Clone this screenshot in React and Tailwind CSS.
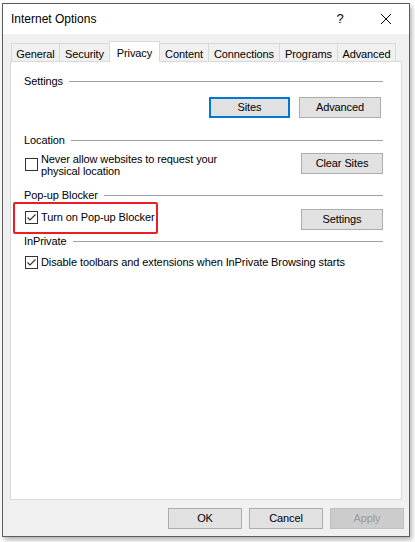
import React from "react";

const tabs = [
  { label: "General", w: "w-[49px]" },
  { label: "Security", w: "w-[51px]" },
  { label: "Privacy", w: "w-[51px]", active: true },
  { label: "Content", w: "w-[50px]" },
  { label: "Connections", w: "w-[72px]" },
  { label: "Programs", w: "w-[59px]" },
  { label: "Advanced", w: "w-[59px]" },
];

// Encabezado de grupo con línea
const GroupHeader = ({ label, className = "" }) => (
  <div className={`flex items-center h-[14px] ${className}`}>
    <span className="leading-[14px]">{label}</span>
    <div className="flex-1 h-px bg-[#a0a0a0] ml-[6px]" />
  </div>
);

const CheckBox = ({ checked }) => (
  <div className="w-[13px] h-[13px] border border-[#333333] bg-white shrink-0 flex items-center justify-center">
    {checked && (
      <svg width="11" height="11" viewBox="0 0 11 11">
        <polyline
          points="1.5,5.5 4,8 9.5,2.5"
          fill="none"
          stroke="#333333"
          strokeWidth="1.2"
        />
      </svg>
    )}
  </div>
);

const WinButton = ({ children, className = "" }) => (
  <div
    className={`h-[21px] flex items-center justify-center bg-[#e1e1e1] border border-[#adadad] ${className}`}
  >
    {children}
  </div>
);

export default function App() {
  return (
    <div
      className="w-[415px] h-[542px] bg-white pl-[2px] pt-[3px] text-[11px] tracking-[-0.1px] text-black"
      style={{ fontFamily: '"Liberation Sans", Arial, sans-serif' }}
    >
      <div className="w-[408px] h-[534px] border border-[#5c5c5c] flex flex-col shadow-[2px_3px_5px_rgba(0,0,0,0.3)]">
        {/* Barra de título */}
        <div className="h-[30px] bg-white flex items-center shrink-0">
          <span className="pl-[8px] text-[12px] tracking-normal">Internet Options</span>
          <div className="ml-auto flex h-full">
            <div className="w-[46px] flex items-center justify-center text-[13px]">?</div>
            <div className="w-[46px] flex items-center justify-center">
              <svg width="10" height="10" viewBox="0 0 10 10">
                <path d="M0 0 L10 10 M10 0 L0 10" stroke="#000" strokeWidth="1" />
              </svg>
            </div>
          </div>
        </div>

        {/* Cuerpo */}
        <div className="flex-1 bg-[#f0f0f0] pt-[7px] px-[7px] flex flex-col">
          {/* Pestañas */}
          <div className="flex items-end h-[20px] pl-[1px]">
            {tabs.map((t, i) => (
              <div
                key={t.label}
                className={`${t.w} ${i > 0 ? "-ml-px" : ""} border-t border-l border-r border-[#d9d9d9] flex justify-center ${
                  t.active
                    ? "h-[21px] -mb-px bg-white relative z-10 pt-[3px]"
                    : "h-[18px] bg-[#f0f0f0] pt-[2px]"
                }`}
              >
                {t.label}
              </div>
            ))}
          </div>

          {/* Panel */}
          <div className="h-[439px] bg-white border border-[#d9d9d9] relative pt-[12px] pl-[13px] pr-[18px]">
            <GroupHeader label="Settings" />
            <div className="flex justify-end gap-[9px] mt-[9px] pr-[2px]">
              <div className="w-[81px] h-[21px] flex items-center justify-center bg-[#e1e1e1] border-2 border-[#0078d7]">
                Sites
              </div>
              <WinButton className="w-[82px]">Advanced</WinButton>
            </div>

            <GroupHeader label="Location" className="mt-[15px]" />
            <div className="flex items-start mt-[6px]">
              <div className="flex items-start ml-[1px]">
                <div className="mt-[5px]">
                  <CheckBox />
                </div>
                <div className="ml-[3px] leading-[12px]">
                  Never allow websites to request your
                  <br />
                  physical location
                </div>
              </div>
              <WinButton className="w-[82px] ml-auto">Clear Sites</WinButton>
            </div>

            <GroupHeader label="Pop-up Blocker" className="mt-[11px]" />
            <div className="flex items-start mt-[7px]">
              <div className="flex items-center h-[14px] mt-[1px] ml-[1px]">
                <CheckBox checked />
                <span className="ml-[3px]">Turn on Pop-up Blocker</span>
              </div>
              <WinButton className="w-[82px] ml-auto">Settings</WinButton>
            </div>

            <GroupHeader label="InPrivate" className="mt-[4px]" />
            <div className="flex items-center h-[13px] mt-[8px] ml-[1px]">
              <CheckBox checked />
              <span className="ml-[3px]">
                Disable toolbars and extensions when InPrivate Browsing starts
              </span>
            </div>

            {/* Marca roja */}
            <div className="absolute left-[2px] top-[140px] w-[145px] h-[32px] border-2 border-[#ee1c25] rounded-[2px]" />
          </div>

          {/* Botones inferiores */}
          <div className="flex justify-end gap-[7px] mt-[8px] -mr-[2px]">
            <WinButton className="w-[74px]">OK</WinButton>
            <WinButton className="w-[74px]">Cancel</WinButton>
            <div className="w-[74px] h-[21px] flex items-center justify-center bg-[#cccccc] border border-[#bfbfbf] text-[#9a9a9a]">
              Apply
            </div>
          </div>
        </div>
      </div>
    </div>
  );
}
